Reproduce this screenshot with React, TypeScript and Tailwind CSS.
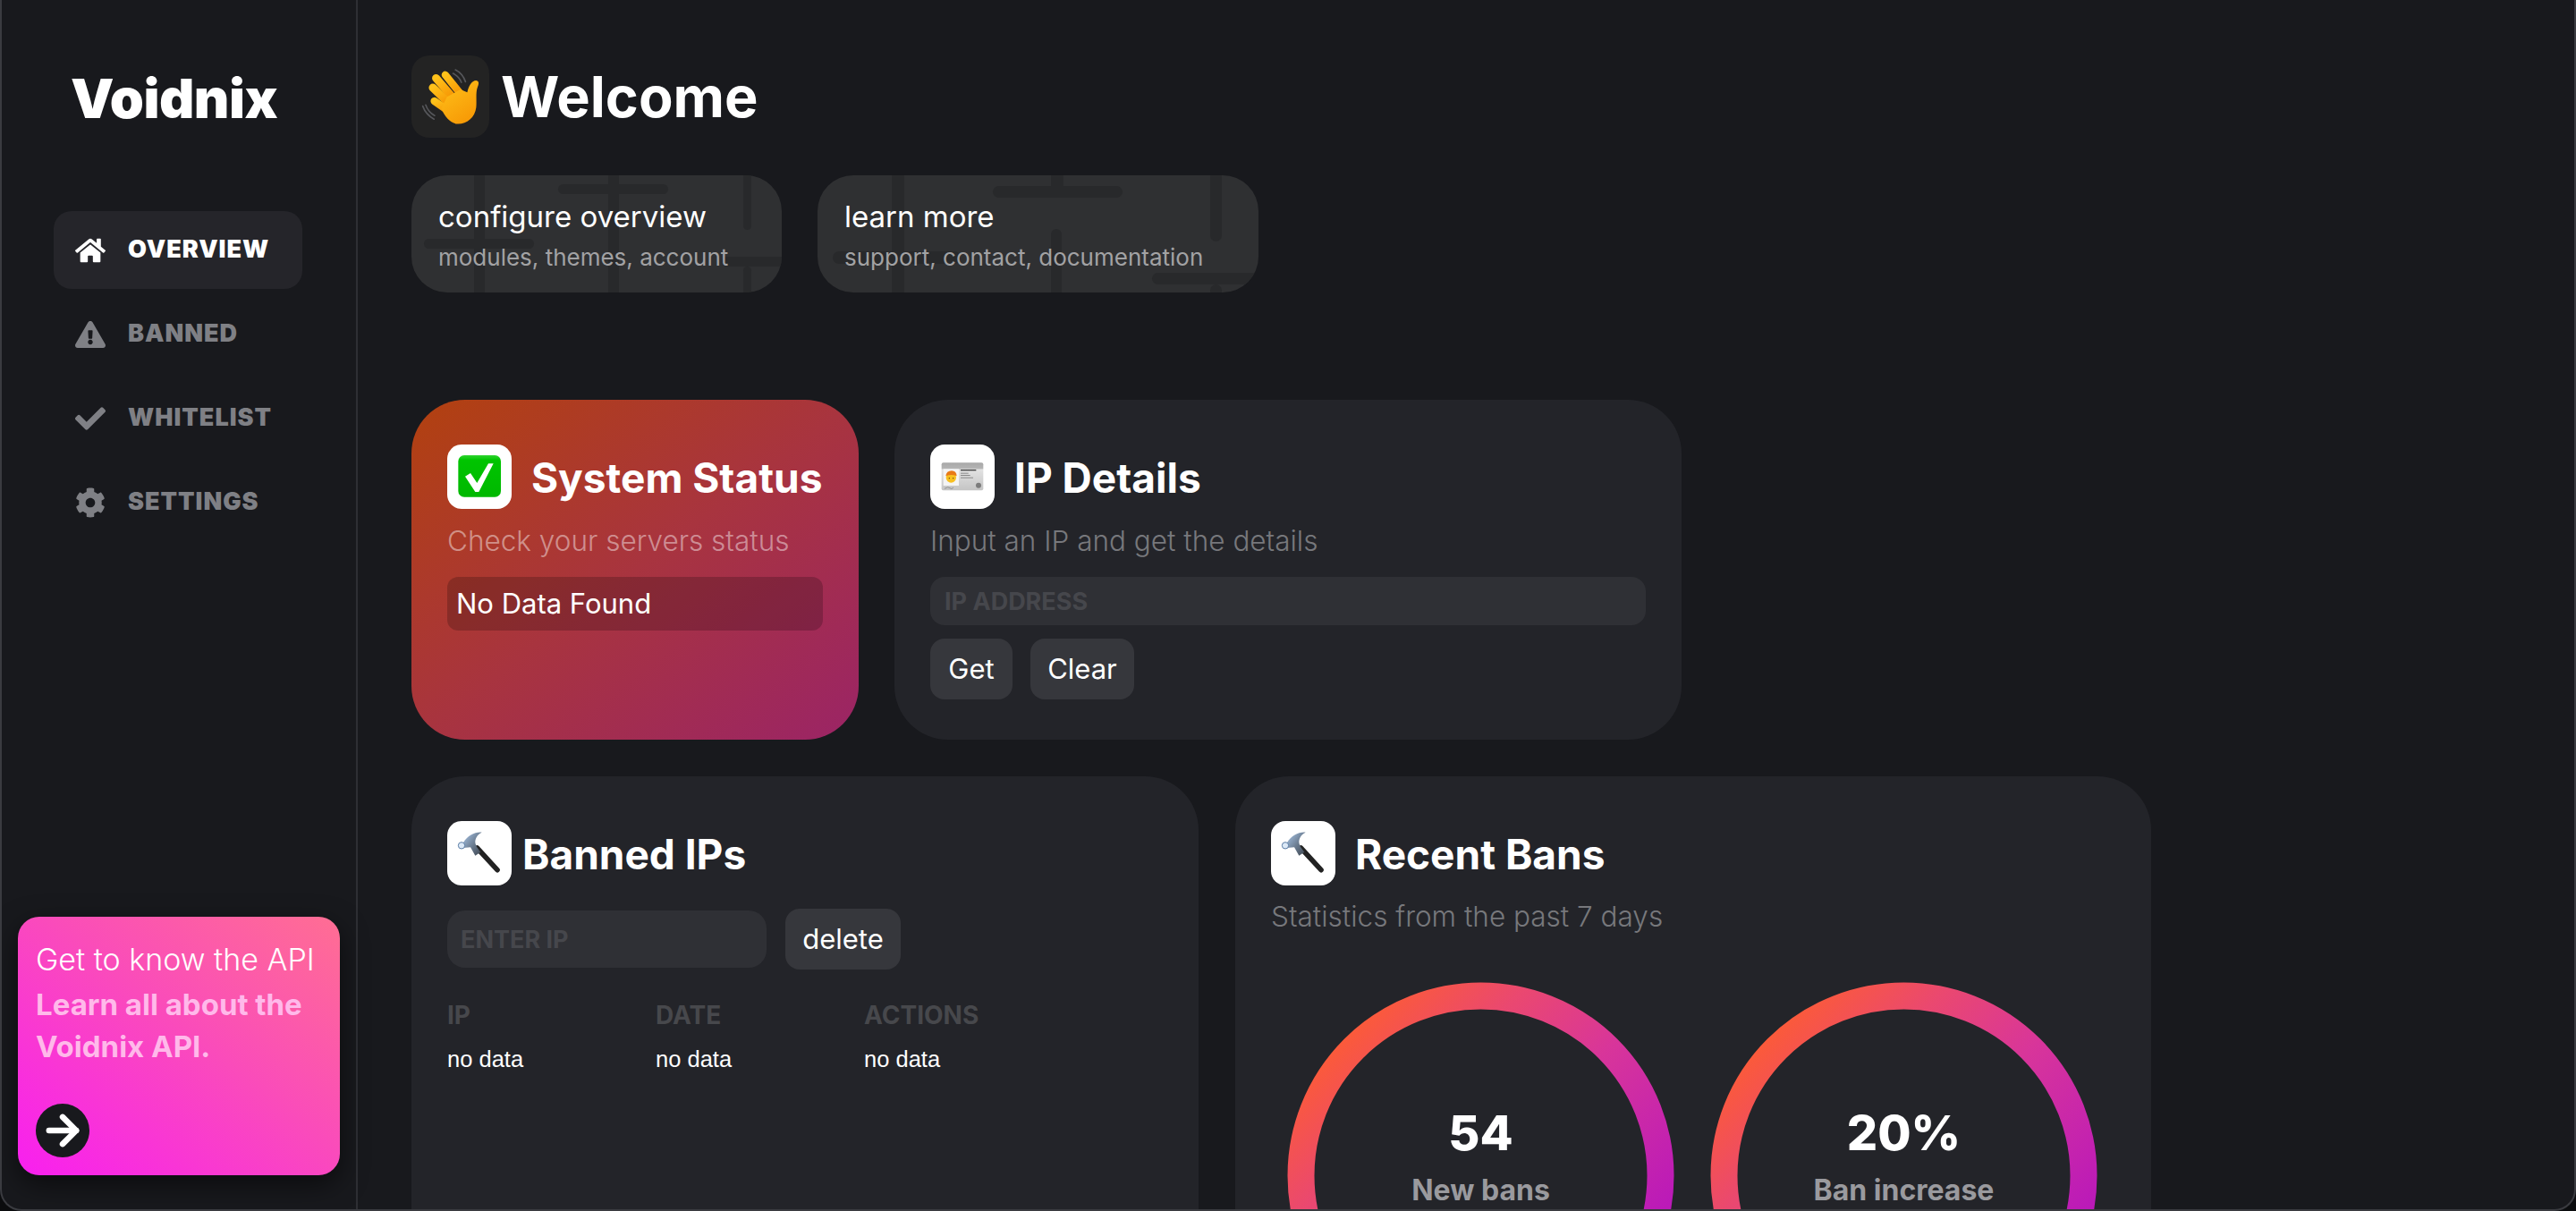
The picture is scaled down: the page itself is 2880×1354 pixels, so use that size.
import { FaHome, FaExclamationTriangle, FaCheck, FaCog } from "react-icons/fa";
import { ArrowRight } from "lucide-react";
import type { ReactNode } from "react";

const navItems = [
  { label: "OVERVIEW", icon: FaHome, active: true },
  { label: "BANNED", icon: FaExclamationTriangle, active: false },
  { label: "WHITELIST", icon: FaCheck, active: false },
  { label: "SETTINGS", icon: FaCog, active: false },
];

function WaveIcon() {
  return (
    <svg viewBox="30 36 262 276" className="h-full w-full">
      <defs>
        <linearGradient id="hand" x1="0" y1="0" x2="0.6" y2="1">
          <stop offset="0" stopColor="#ffc21a" />
          <stop offset="1" stopColor="#f79a06" />
        </linearGradient>
      </defs>
      <g fill="none" stroke="#55565a" strokeWidth="5" strokeLinecap="round">
        <path d="M170 96q22 12 28 30" />
        <path d="M178 84q24 12 34 40" />
        <path d="M78 202q8 24 30 36" />
        <path d="M68 206q10 28 38 44" />
      </g>
      <g fill="none" stroke="url(#hand)" strokeLinecap="round">
        <path d="M144 101 198 168" strokeWidth="25" />
        <path d="M113 112 170 178" strokeWidth="27" />
        <path d="M102 144 158 198" strokeWidth="27" />
        <path d="M107 189 160 226" strokeWidth="25" />
      </g>
      <path
        fill="url(#hand)"
        d="M150 175 195 150 218 160C222 140 232 120 248 120 260 122 256 134 252 144 246 160 250 190 248 210 244 246 214 268 184 266 160 264 142 240 130 214Z"
      />
    </svg>
  );
}

function CheckIcon() {
  return (
    <svg viewBox="30 36 216 216" className="h-full w-full">
      <defs>
        <linearGradient id="green" x1="0" y1="0" x2="0" y2="1">
          <stop offset="0" stopColor="#2fd42f" />
          <stop offset="0.12" stopColor="#00c400" />
          <stop offset="1" stopColor="#00b800" />
        </linearGradient>
      </defs>
      <rect x="67" y="72" width="143" height="140" rx="20" fill="url(#green)" />
      <path fill="#fff" d="M90 143 108 132 130 165 168 100 185 100 136 195 124 195Z" />
    </svg>
  );
}

function IdCardIcon() {
  return (
    <svg viewBox="30 36 216 216" className="h-full w-full">
      <defs>
        <linearGradient id="idcard" x1="0" y1="0" x2="0" y2="1">
          <stop offset="0" stopColor="#a8a8a8" />
          <stop offset="0.2" stopColor="#b4b4b4" />
          <stop offset="0.25" stopColor="#e2e2e2" />
          <stop offset="1" stopColor="#c4c4c4" />
        </linearGradient>
      </defs>
      <rect x="68" y="97" width="140" height="93" rx="6" fill="url(#idcard)" />
      <rect x="74" y="118" width="52" height="56" fill="#f4f4f4" />
      <circle cx="100" cy="147" r="17" fill="#f8c020" />
      <path d="M82 142q2-18 20-18 16 0 17 18-18-8-37 0Z" fill="#e87a18" />
      <circle cx="94" cy="149" r="2" fill="#5a3a10" />
      <circle cx="107" cy="149" r="2" fill="#5a3a10" />
      <rect x="132" y="120" width="52" height="4" fill="#444" />
      <rect x="132" y="131" width="26" height="3" fill="#8a8a8a" />
      <rect x="132" y="138" width="32" height="3" fill="#8a8a8a" />
      <rect x="132" y="146" width="42" height="3" fill="#8a8a8a" />
      <path d="M78 184q12-8 18-2t12-2" fill="none" stroke="#777" strokeWidth="2" />
      <circle cx="192" cy="173" r="9" fill="#7c7c7c" />
    </svg>
  );
}

function HammerIcon({ id }: { id: string }) {
  return (
    <svg viewBox="30 40 216 216" className="h-full w-full">
      <defs>
        <linearGradient id={id} x1="0" y1="0" x2="1" y2="1">
          <stop offset="0" stopColor="#a9c6e8" />
          <stop offset="0.5" stopColor="#6f8196" />
          <stop offset="1" stopColor="#3c444e" />
        </linearGradient>
      </defs>
      <path d="M130 130 198 204" stroke="#222" strokeWidth="17" strokeLinecap="round" />
      <path
        fill={`url(#${id})`}
        d="M84 112C100 88 122 76 146 78 130 86 124 98 124 112 126 126 136 136 142 144L124 156 108 128 84 130Z"
      />
      <circle cx="78" cy="122" r="11" fill="#dce9f7" stroke="#5c7ea6" strokeWidth="3" />
    </svg>
  );
}

function Pattern({ bars, width }: { bars: number[][]; width: number }) {
  return (
    <svg viewBox={`0 0 ${width} 131`} className="absolute inset-0 h-full w-full">
      {bars.map(([x, y, w, h], i) => (
        <rect key={i} x={x} y={y} width={w} height={h} rx={Math.min(w, h) / 2} fill="#28292b" />
      ))}
    </svg>
  );
}

function ActionCard({
  title,
  sub,
  width,
  bars,
}: {
  title: string;
  sub: string;
  width: string;
  bars: number[][];
}) {
  return (
    <div className={`relative overflow-hidden rounded-[40px] bg-[#2f3032] ${width} h-[131px] pl-[30px] pt-[24px]`}>
      <Pattern bars={bars} width={width === "w-[414px]" ? 414 : 493} />
      <div className="relative text-[33px] font-normal leading-[44px] text-white">{title}</div>
      <div className="relative mt-[7px] text-[26px] leading-[34px] text-[#a2a2a4]">{sub}</div>
    </div>
  );
}

function Tile({ children }: { children: ReactNode }) {
  return <div className="h-[72px] w-[72px] shrink-0 overflow-hidden rounded-[16px] bg-white">{children}</div>;
}

function Gauge({ value, label, id }: { value: string; label: string; id: string }) {
  return (
    <div className="relative h-[433px] w-[433px] shrink-0">
      <svg viewBox="0 0 433 433" className="absolute inset-0 h-full w-full">
        <defs>
          <linearGradient id={id} x1="0" y1="0" x2="1" y2="1">
            <stop offset="0.12" stopColor="#fb5a3a" />
            <stop offset="0.3" stopColor="#ea4870" />
            <stop offset="0.5" stopColor="#d8359a" />
            <stop offset="0.8" stopColor="#bb1ab8" />
          </linearGradient>
        </defs>
        <circle cx="216.5" cy="216.5" r="201" fill="none" stroke={`url(#${id})`} strokeWidth="30" />
      </svg>
      <div className="relative flex flex-col items-center pt-[133px]">
        <div className="text-[54px] font-extrabold leading-[72px] text-white">{value}</div>
        <div className="text-[32px] font-bold leading-[56px] text-[#9a9a9e]">{label}</div>
      </div>
    </div>
  );
}

export default function App() {
  return (
    <div className="h-[1354px] w-[2880px] overflow-hidden bg-[#0b0c0e] font-['Inter',sans-serif]">
      <div className="flex h-full overflow-hidden rounded-b-[24px] border-2 border-t-0 border-[#3a3b40] bg-[#18191d]">
        {/* Sidebar */}
        <aside className="flex w-[398px] shrink-0 flex-col border-r-2 border-[#2e2f34]">
          <div className="pl-[77px] pt-[78px] text-[61px] font-black leading-[64px] tracking-[-0.5px] text-white">
            Voidnix
          </div>
          <nav className="ml-[58px] mt-[94px] flex w-[278px] flex-col gap-[7px]">
            {navItems.map((item) => {
              const Icon = item.icon;
              return (
                <div
                  key={item.label}
                  className={`flex h-[87px] items-center gap-[25px] rounded-[20px] pl-[24px] text-[27px] font-black tracking-[1px] ${
                    item.active ? "bg-[#25252a] text-white" : "text-[#7f8085]"
                  }`}
                >
                  <Icon className="h-[34px] w-[34px] shrink-0" />
                  <span>{item.label}</span>
                </div>
              );
            })}
          </nav>
          <div className="mx-[18px] mb-[38px] mt-auto flex h-[289px] flex-col rounded-[24px] bg-[linear-gradient(to_top_right,#f81ff0,#fa4cba_55%,#ff6e93)] px-[20px] pt-[26px] shadow-[0_10px_30px_rgba(0,0,0,0.55)]">
            <div className="whitespace-nowrap text-[34px] font-light leading-[44px] text-white">Get to know the API</div>
            <div className="mt-[5px] text-[33px] font-bold leading-[47px] text-[#ffb9ea]">
              Learn all about the
              <br />
              Voidnix API.
            </div>
            <div className="mt-auto mb-[20px] flex h-[60px] w-[60px] items-center justify-center rounded-full bg-[#18191d]">
              <ArrowRight className="h-[52px] w-[52px] text-white" strokeWidth={3} />
            </div>
          </div>
        </aside>

        {/* Main */}
        <main className="min-w-0 flex-1 overflow-hidden pl-[60px] pt-[62px]">
          <div className="flex items-center gap-[13px]">
            <div className="h-[92px] w-[87px] overflow-hidden rounded-[20px] bg-[#232323]">
              <WaveIcon />
            </div>
            <h1 className="text-[63px] font-bold leading-[92px] text-white">Welcome</h1>
          </div>

          <div className="mt-[42px] flex gap-[40px]">
            <ActionCard
              title="configure overview"
              sub="modules, themes, account"
              width="w-[414px]"
              bars={[
                [70, -10, 12, 160],
                [220, -10, 12, 160],
                [371, -10, 9, 71],
                [164, 10, 123, 11],
                [14, 71, 123, 11],
                [347, 91, 80, 11],
                [371, 102, 9, 40],
              ]}
            />
            <ActionCard
              title="learn more"
              sub="support, contact, documentation"
              width="w-[493px]"
              bars={[
                [83, -10, 14, 160],
                [261, -10, 14, 34],
                [196, 12, 145, 13],
                [439, -10, 13, 84],
                [261, 60, 12, 90],
                [17, 85, 143, 14],
                [374, 109, 130, 13],
                [439, 122, 13, 20],
              ]}
            />
          </div>

          <div className="mt-[120px] flex gap-[40px]">
            <section className="h-[380px] w-[500px] rounded-[60px] bg-[linear-gradient(to_bottom_right,#b2410f,#a8343f_50%,#9b2466)] px-[40px] pt-[50px]">
              <div className="flex items-center gap-[22px]">
                <Tile>
                  <CheckIcon />
                </Tile>
                <h2 className="whitespace-nowrap pt-[3px] text-[46px] font-bold leading-[69px] text-white">System Status</h2>
              </div>
              <p className="mt-[16px] text-[31.5px] font-light leading-[40px] text-white/45">Check your servers status</p>
              <div className="mt-[20px] flex h-[60px] items-center rounded-[12px] bg-black/20 pl-[10px] text-[31px] text-white">
                No Data Found
              </div>
            </section>

            <section className="h-[380px] w-[880px] rounded-[60px] bg-[#232429] px-[40px] pt-[50px]">
              <div className="flex items-center gap-[22px]">
                <Tile>
                  <IdCardIcon />
                </Tile>
                <h2 className="pt-[3px] text-[46px] font-bold leading-[69px] text-white">IP Details</h2>
              </div>
              <p className="mt-[16px] text-[31.5px] font-light leading-[40px] text-[#77787c]">
                Input an IP and get the details
              </p>
              <input
                placeholder="IP ADDRESS"
                className="mt-[20px] block h-[54px] w-full rounded-[16px] bg-[#2f3035] px-[16px] text-[27px] font-bold outline-none placeholder:text-[#46474c]"
              />
              <div className="mt-[15px] flex gap-[20px]">
                <button className="h-[68px] w-[92px] rounded-[16px] bg-[#36373c] text-[31px] text-white">Get</button>
                <button className="h-[68px] w-[116px] rounded-[16px] bg-[#36373c] text-[31px] text-white">Clear</button>
              </div>
            </section>
          </div>

          <div className="mt-[41px] flex items-start gap-[41px]">
            <section className="h-[600px] w-[880px] rounded-[60px] bg-[#232429] px-[40px] pt-[50px]">
              <div className="flex items-center gap-[12px]">
                <Tile>
                  <HammerIcon id="steel-a" />
                </Tile>
                <h2 className="pt-[3px] text-[46px] font-bold leading-[69px] text-white">Banned IPs</h2>
              </div>
              <div className="mt-[26px] flex items-center gap-[21px]">
                <input
                  placeholder="ENTER IP"
                  className="block h-[64px] w-[357px] rounded-[20px] bg-[#2f3035] px-[15px] text-[27px] font-bold outline-none placeholder:text-[#46474c]"
                />
                <button className="h-[68px] w-[129px] rounded-[16px] bg-[#36373c] text-[31px] text-white">delete</button>
              </div>
              <div className="mt-[32px] grid w-[699px] grid-cols-3">
                <div className="text-[28px] font-bold leading-[38px] text-[#47484c]">IP</div>
                <div className="text-[28px] font-bold leading-[38px] text-[#47484c]">DATE</div>
                <div className="text-[28px] font-bold leading-[38px] text-[#47484c]">ACTIONS</div>
                <div className="mt-[14px] font-['Liberation_Sans',sans-serif] text-[25.5px] leading-[32px] text-white">no data</div>
                <div className="mt-[14px] font-['Liberation_Sans',sans-serif] text-[25.5px] leading-[32px] text-white">no data</div>
                <div className="mt-[14px] font-['Liberation_Sans',sans-serif] text-[25.5px] leading-[32px] text-white">no data</div>
              </div>
            </section>

            <section className="h-[600px] w-[1024px] rounded-[60px] bg-[#232429] px-[40px] pt-[50px]">
              <div className="flex items-center gap-[22px]">
                <Tile>
                  <HammerIcon id="steel-b" />
                </Tile>
                <h2 className="pt-[3px] text-[46px] font-bold leading-[69px] text-white">Recent Bans</h2>
              </div>
              <p className="mt-[15px] text-[31.5px] font-light leading-[40px] text-[#77787c]">Statistics from the past 7 days</p>
              <div className="ml-[18px] mt-[53px] flex gap-[40px]">
                <Gauge value="54" label="New bans" id="gauge-a" />
                <Gauge value="20%" label="Ban increase" id="gauge-b" />
              </div>
            </section>
          </div>
        </main>
      </div>
    </div>
  );
}
